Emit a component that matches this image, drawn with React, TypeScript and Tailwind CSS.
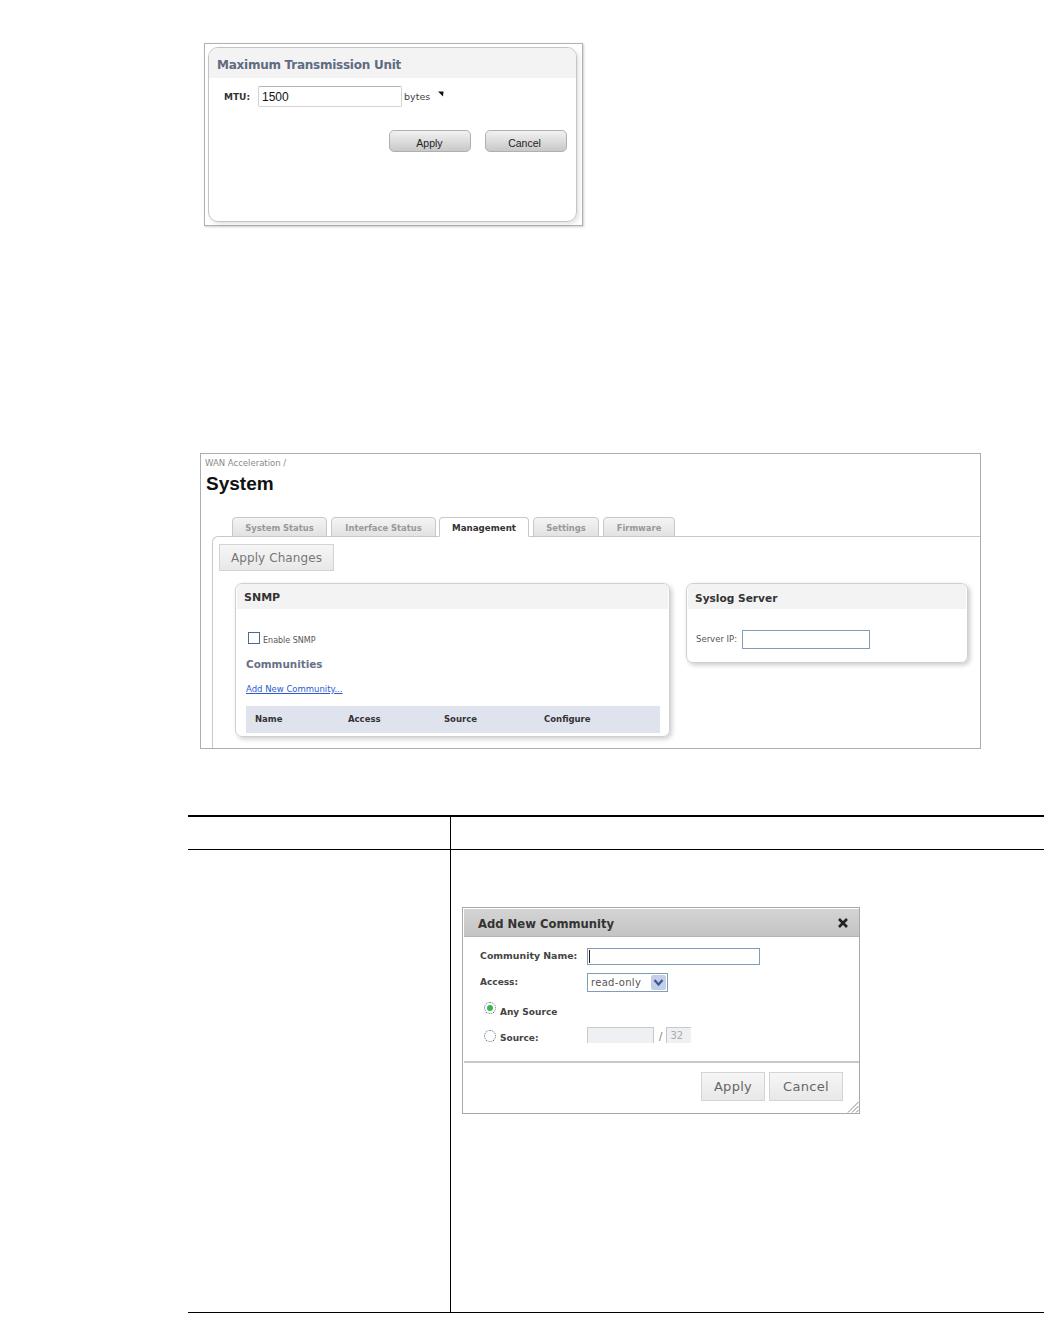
import React from "react";

const verdana = "font-['DejaVu_Sans',sans-serif]";
const arial = "font-['Liberation_Sans',Arial,sans-serif]";

function TabItem({ label, width, active }: { label: string; width: string; active?: boolean }) {
  return (
    <div
      className={`${width} h-5 flex items-center justify-center pt-[3px] rounded-t-[4px] border border-[#c8c8c8] font-bold ${
        active
          ? "bg-white border-b-white text-[8.7px] text-[#333]"
          : "bg-gradient-to-b from-[#f4f4f4] to-[#e2e2e2] text-[8.4px] text-[#999]"
      }`}
    >
      {label}
    </div>
  );
}

function MtuDialog() {
  return (
    <div className="ml-[204px] mt-[43px] w-[379px] h-[183px] border border-[#b0b0b0] pl-[3px] pt-[3px] shadow-[1px_1px_2px_rgba(0,0,0,0.2)]">
      <div className={`w-[369px] h-[175px] rounded-[10px] border border-[#c4c4c4] overflow-hidden shadow-[2px_2px_4px_rgba(0,0,0,0.12)] ${verdana}`}>
        <div className="h-[30px] bg-[#f3f3f3] pl-[8px] pt-[3px] flex items-center text-[12px] tracking-[-0.25px] font-bold text-[#5f6b82]">
          Maximum Transmission Unit
        </div>
        <div className="flex items-center pl-[15px] mt-[8px] h-[21px]">
          <span className="w-[34px] pt-[2px] text-[9px] font-bold text-[#333]">MTU:</span>
          <input
            readOnly
            value="1500"
            className={`w-[144px] h-[21px] rounded-[2px] border border-[#d4d4d4] border-t-[#b4b4b4] px-[3px] text-[12px] text-[#111] ${arial}`}
          />
          <span className="ml-[2px] pt-[2px] text-[9.5px] text-[#444]">bytes</span>
          <svg className="ml-[8px] mb-[6px]" width="6" height="6" viewBox="0 0 6 6">
            <path d="M0 0.5 L5.5 0.5 L5 5.5 Z" fill="#111" />
          </svg>
        </div>
        <div className={`flex justify-end gap-[14px] pr-[9px] mt-[23px] ${arial}`}>
          <button className="w-[82px] h-[22px] pt-[5px] pr-[1px] rounded-[5px] border border-[#b0b0b0] bg-gradient-to-b from-[#f2f2f2] to-[#c8c8c8] text-[10.5px] text-[#222]">
            Apply
          </button>
          <button className="w-[82px] h-[22px] pt-[5px] pr-[3px] rounded-[5px] border border-[#b0b0b0] bg-gradient-to-b from-[#f2f2f2] to-[#c8c8c8] text-[10.5px] text-[#222]">
            Cancel
          </button>
        </div>
      </div>
    </div>
  );
}

function SystemPage() {
  return (
    <div className={`ml-[200px] mt-[227px] w-[781px] h-[296px] border border-[#adadad] overflow-hidden ${verdana}`}>
      <div className="h-[17px] pl-[4px] pt-[3px] text-[8.5px] leading-[12px] text-[#8a8a8a]">WAN Acceleration /</div>
      <div className={`h-[26px] pl-[5px] text-[19px] leading-[26px] font-bold text-[#111] ${arial}`}>System</div>
      <div className="h-[20px] mt-[20px] flex pl-[31px] relative z-10">
        <TabItem label="System Status" width="w-[95px]" />
        <div className="w-[4px]" />
        <TabItem label="Interface Status" width="w-[105px]" />
        <div className="w-[3px]" />
        <TabItem label="Management" width="w-[90px]" active />
        <div className="w-[4px]" />
        <TabItem label="Settings" width="w-[66px]" />
        <div className="w-[4px]" />
        <TabItem label="Firmware" width="w-[72px]" />
      </div>
      <div className="-mt-px ml-[11px] h-[240px] rounded-tl-[6px] border-l border-t border-[#c8c8c8]">
        <div className="pl-[6px] pt-[7px]">
          <button className="w-[115px] h-[27px] border border-[#d4d4d4] bg-gradient-to-b from-[#f6f6f6] to-[#e8e8e8] text-[12px] tracking-[0.1px] text-[#777]">
            Apply Changes
          </button>
        </div>
        <div className="flex items-start gap-[16px] ml-[22px] mt-[12px]">
          <div className="w-[435px] h-[154px] rounded-[7px] border border-[#d0d0d0] shadow-[2px_2px_5px_rgba(0,0,0,0.2)] overflow-hidden">
            <div className="h-[25px] mx-[1px] bg-[#f3f3f3] pl-[7px] pt-[4px] flex items-center text-[11px] font-bold text-[#333]">SNMP</div>
            <div className="flex items-center mt-[22px] ml-[12px] h-[13px]">
              <div className="w-[12px] h-[12px] border border-[#4d6a8a] bg-white" />
              <span className="ml-[3px] mt-[6px] text-[8px] text-[#555]">Enable SNMP</span>
            </div>
            <div className="ml-[10px] mt-[13px] text-[10.4px] leading-[14px] font-bold text-[#667088]">Communities</div>
            <div className="ml-[10px] mt-[12px] text-[8.5px] leading-[12px] text-[#2a5bd0] underline">Add New Community...</div>
            <div className="ml-[10px] mt-[11px] w-[414px] h-[27px] bg-[#dfe3ee] flex items-center text-[8.5px] font-bold text-[#333]">
              <span className="ml-[9px] w-[93px]">Name</span>
              <span className="w-[96px]">Access</span>
              <span className="w-[100px]">Source</span>
              <span>Configure</span>
            </div>
          </div>
          <div className="w-[282px] h-[80px] rounded-[7px] border border-[#d0d0d0] shadow-[2px_2px_5px_rgba(0,0,0,0.22)] overflow-hidden">
            <div className="h-[25px] mx-[1px] bg-[#f3f3f3] pl-[7px] pt-[4px] flex items-center text-[10.6px] font-bold text-[#333]">Syslog Server</div>
            <div className="flex items-center mt-[21px] ml-[9px]">
              <span className="w-[46px] text-[8.5px] text-[#555]">Server IP:</span>
              <input readOnly className="w-[128px] h-[19px] border border-[#7f9db9] bg-white" />
            </div>
          </div>
        </div>
      </div>
    </div>
  );
}

function RadioDot({ checked }: { checked?: boolean }) {
  return (
    <div className="w-[12px] h-[12px] rounded-full border border-dotted border-[#4d6a8a] bg-white flex items-center justify-center">
      {checked && <div className="w-[6px] h-[6px] rounded-full bg-[#3fb34f]" />}
    </div>
  );
}

function CommunityDialog() {
  return (
    <div className={`relative ml-[11px] mt-[57px] w-[398px] h-[207px] border border-[#a8a8a8] pl-[1px] pt-[1px] text-[9px] font-bold text-[#444] ${verdana}`}>
      <div className="w-[395px] h-[28px] border-b border-[#b4b4b4] bg-gradient-to-b from-[#d4d4d4] to-[#c4c4c4] flex items-center justify-between pl-[14px] pr-[11px] text-[11.6px] text-[#333]">
        <span className="pt-[5px]">Add New Community</span>
        <svg width="10" height="10" viewBox="0 0 10 10">
          <path d="M1 1 L9 9 M9 1 L1 9" stroke="#222" strokeWidth="2.6" />
        </svg>
      </div>
      <div className="flex items-center mt-[11px] ml-[16px] h-[17px]">
        <span className="w-[107px] text-[9.4px]">Community Name:</span>
        <div className="relative w-[173px] h-[17px] border border-[#7f9db9] bg-white">
          <div className="absolute left-[1px] top-[1px] w-px h-[13px] bg-[#222]" />
        </div>
      </div>
      <div className="flex items-center mt-[8px] ml-[16px] h-[19px]">
        <span className="w-[107px]">Access:</span>
        <div className="w-[81px] h-[19px] border border-[#7f9db9] flex items-center justify-between pl-[3px] pr-[1px] text-[10px] tracking-[0.3px] font-normal text-[#555]">
          <span>read-only</span>
          <div className="w-[15px] h-[15px] rounded-[2px] bg-[#c3cfe6] flex items-center justify-center">
            <svg width="11" height="9" viewBox="0 0 11 9">
              <path d="M1.5 2 L5.5 6.5 L9.5 2" fill="none" stroke="#3f5a96" strokeWidth="2.4" />
            </svg>
          </div>
        </div>
      </div>
      <div className="flex items-start mt-[10px] ml-[20px] h-[14px]">
        <RadioDot checked />
        <span className="ml-[4px] mt-[3px] leading-[14px]">Any Source</span>
      </div>
      <div className="flex items-start mt-[14px] ml-[20px] h-[16px]">
        <RadioDot />
        <span className="ml-[4px] mt-[1px] w-[87px] leading-[14px]">Source:</span>
        <div className="-mt-[3px] w-[67px] h-[16px] border-l border-t border-r border-[#c8c8c8] bg-[#eef0f3]" />
        <span className="ml-[5px] -mt-[1px] text-[10px] font-normal text-[#777]">/</span>
        <div className="-mt-[3px] ml-[4px] w-[25px] h-[16px] border-l border-t border-[#c8c8c8] bg-[#eef0f3] pl-[3px] text-[10px] font-normal text-[#aaa]">32</div>
      </div>
      <div className="mt-[15px] w-[395px] h-[2px] bg-[#c8c8c8]" />
      <div className="flex justify-end gap-[4px] pr-[16px] mt-[9px] font-normal">
        <button className="w-[64px] h-[29px] border border-[#d4d4d4] bg-gradient-to-b from-[#f6f6f6] to-[#e8e8e8] text-[13px] tracking-[0.3px] text-[#666]">Apply</button>
        <button className="w-[74px] h-[29px] border border-[#d4d4d4] bg-gradient-to-b from-[#f6f6f6] to-[#e8e8e8] text-[13px] tracking-[0.3px] text-[#666]">Cancel</button>
      </div>
      <svg className="absolute right-0 bottom-0" width="12" height="12" viewBox="0 0 12 12">
        <path d="M11.5 1 L1 11.5 M11.5 5 L5 11.5 M11.5 9 L9 11.5" stroke="#888" strokeWidth="1" />
      </svg>
    </div>
  );
}

export default function App() {
  return (
    <div className="relative w-[1052px] h-[1332px] bg-white overflow-hidden">
      <MtuDialog />
      <SystemPage />
      <div className="ml-[188px] mt-[66px] w-[856px] border-t-2 border-b border-black">
        <div className="flex h-[33px] border-b border-black">
          <div className="w-[263px] border-r border-black" />
        </div>
        <div className="flex h-[462px]">
          <div className="w-[263px] border-r border-black shrink-0" />
          <div>
            <CommunityDialog />
          </div>
        </div>
      </div>
    </div>
  );
}
